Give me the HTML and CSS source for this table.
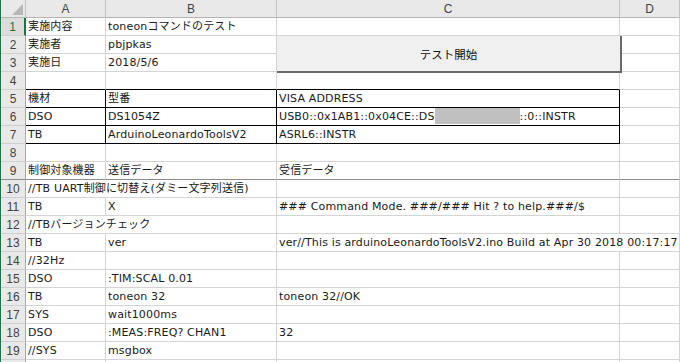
FILE: index.html
```html
<!DOCTYPE html>
<html lang="ja">
<head>
<meta charset="utf-8">
<title>Sheet</title>
<link rel="stylesheet" href="styles.css">
</head>
<body>
<div class="sheet">
  <div class="grid">
    <div class="corner"><span class="tri"></span></div>
    <div class="ch">A</div><div class="ch">B</div><div class="ch">C</div><div class="ch">D</div>

    <div class="rh sel">1</div><div class="c">実施内容</div><div class="c">toneonコマンドのテスト</div><div class="c"></div><div class="c"></div>
    <div class="rh">2</div><div class="c">実施者</div><div class="c">pbjpkas</div><div class="c"></div><div class="c"></div>
    <div class="rh">3</div><div class="c">実施日</div><div class="c">2018/5/6</div><div class="c"></div><div class="c"></div>
    <div class="rh">4</div><div class="c bb"></div><div class="c bb"></div><div class="c bb"></div><div class="c"></div>
    <div class="rh">5</div><div class="c box">機材</div><div class="c box">型番</div><div class="c box">VISA ADDRESS</div><div class="c"></div>
    <div class="rh">6</div><div class="c box">DSO</div><div class="c box">DS1054Z</div><div class="c box">USB0::0x1AB1::0x04CE::DS<span class="redact"></span>::0::INSTR</div><div class="c"></div>
    <div class="rh">7</div><div class="c box">TB</div><div class="c box">ArduinoLeonardoToolsV2</div><div class="c box">ASRL6::INSTR</div><div class="c"></div>
    <div class="rh">8</div><div class="c"></div><div class="c"></div><div class="c"></div><div class="c"></div>
    <div class="rh frz">9</div><div class="c frz">制御対象機器</div><div class="c frz">送信データ</div><div class="c frz">受信データ</div><div class="c frz"></div>
    <div class="rh">10</div><div class="c span2">//TB UART制御に切替え(ダミー文字列送信)</div><div class="c"></div><div class="c"></div>
    <div class="rh">11</div><div class="c">TB</div><div class="c">X</div><div class="c">### Command Mode. ###/### Hit ? to help.###/$</div><div class="c"></div>
    <div class="rh">12</div><div class="c span2">//TBバージョンチェック</div><div class="c"></div><div class="c"></div>
    <div class="rh">13</div><div class="c">TB</div><div class="c">ver</div><div class="c span2">ver//This is arduinoLeonardoToolsV2.ino Build at Apr 30 2018 00:17:17</div>
    <div class="rh">14</div><div class="c">//32Hz</div><div class="c"></div><div class="c"></div><div class="c"></div>
    <div class="rh">15</div><div class="c">DSO</div><div class="c">:TIM:SCAL 0.01</div><div class="c"></div><div class="c"></div>
    <div class="rh">16</div><div class="c">TB</div><div class="c">toneon 32</div><div class="c">toneon 32//OK</div><div class="c"></div>
    <div class="rh">17</div><div class="c">SYS</div><div class="c">wait1000ms</div><div class="c"></div><div class="c"></div>
    <div class="rh">18</div><div class="c">DSO</div><div class="c">:MEAS:FREQ? CHAN1</div><div class="c">32</div><div class="c"></div>
    <div class="rh">19</div><div class="c">//SYS</div><div class="c">msgbox</div><div class="c"></div><div class="c"></div>
    <div class="rh"></div><div class="c"></div><div class="c"></div><div class="c"></div><div class="c"></div>
  </div>
  <div class="button">テスト開始</div>
</div>
</body>
</html>
```
FILE: styles.css
```css
* { box-sizing: border-box; }
html, body { margin: 0; padding: 0; background: #fff; }
body {
  width: 680px;
  height: 362px;
  overflow: hidden;
  font-family: "DejaVu Sans", "Noto Sans CJK JP", sans-serif;
  font-size: 11px;
  color: #1a1a1a;
}
.sheet {
  position: relative;
  width: 680px;
  height: 362px;
  border-left: 1px solid #217346;
}
.grid {
  display: grid;
  grid-template-columns: 25px 80px 171px 343px 60px;
  grid-auto-rows: 18px;
}
.corner {
  position: relative;
  background: #e9e9e9;
  border-right: 1px solid #c4c4c4;
  border-bottom: 1px solid #b4b4b4;
}
.tri {
  position: absolute;
  right: 2px;
  bottom: 2px;
  width: 0;
  height: 0;
  border-left: 11px solid transparent;
  border-bottom: 11px solid #b7b7b7;
}
.ch {
  background: #e9e9e9;
  border-right: 1px solid #c4c4c4;
  border-bottom: 1px solid #b4b4b4;
  color: #444;
  font-family: "Liberation Sans", "DejaVu Sans", sans-serif;
  font-size: 12px;
  display: flex;
  align-items: center;
  justify-content: center;
  padding-top: 1px;
}
.rh {
  background: #e9e9e9;
  border-right: 1px solid #a8a8a8;
  border-bottom: 1px solid #cfcfcf;
  color: #444;
  font-family: "Liberation Sans", "DejaVu Sans", sans-serif;
  font-size: 12px;
  display: flex;
  align-items: center;
  justify-content: center;
}
.rh.sel {
  background: #dcdcdc;
  color: #217346;
  border-right: 2px solid #217346;
}
.c {
  border-right: 1px solid #d4d4d4;
  border-bottom: 1px solid #d4d4d4;
  padding: 0 0 0 2px;
  line-height: 17px;
  white-space: nowrap;
  overflow: visible;
  letter-spacing: 0.15px;
}
.span2 { grid-column: span 2; }
.bb { border-bottom-color: #000; }
.box { border-right-color: #000; border-bottom-color: #000; }
.c.frz, .rh.frz { border-bottom-color: #8c8c8c; }
.redact {
  display: inline-block;
  width: 85px;
  height: 16px;
  background: #c0c0c0;
  vertical-align: top;
}
.button {
  position: absolute;
  left: 276px;
  top: 36px;
  width: 345px;
  height: 37px;
  background: #f0f0f0;
  border-right: 2px solid #6a6a6a;
  border-bottom: 2px solid #6a6a6a;
  display: flex;
  align-items: center;
  justify-content: center;
  font-family: "Noto Sans CJK JP", sans-serif;
  font-size: 11.5px;
  color: #111;
}
```
